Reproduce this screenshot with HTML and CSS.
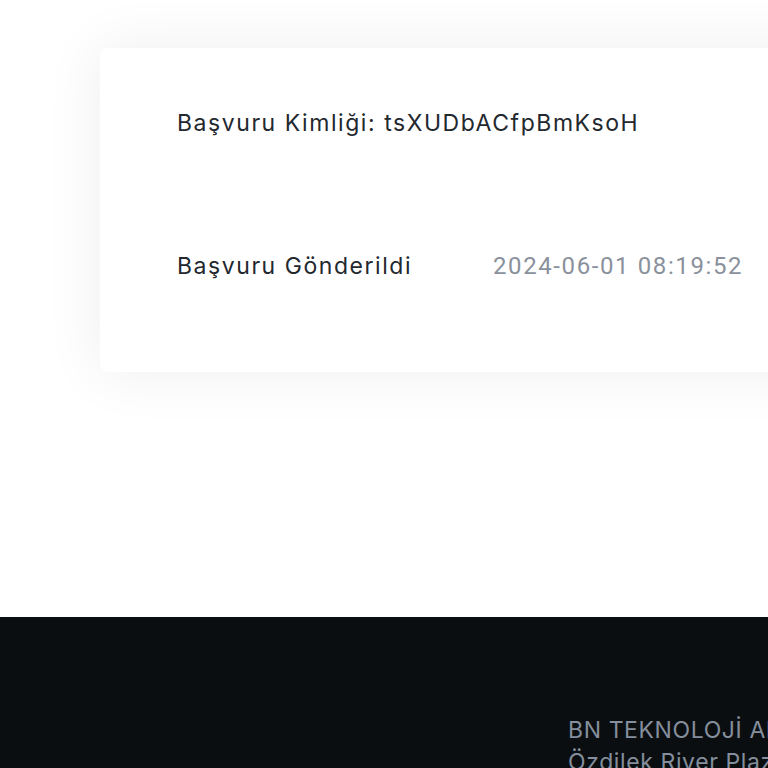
FILE: index.html
```html
<!DOCTYPE html>
<html lang="tr">
<head>
<meta charset="utf-8">
<link rel="stylesheet" href="styles.css">
</head>
<body>
<main class="main">
  <section class="card">
    <div class="row">Başvuru Kimliği: tsXUDbACfpBmKsoH</div>
    <div class="row row-split">
      <span class="label">Başvuru Gönderildi</span>
      <span class="date">2024-06-01 08:19:52</span>
    </div>
  </section>
</main>
<footer class="footer">
  <div class="company">BN TEKNOLOJİ ANONİM ŞİRKETİ</div>
  <div class="company">Özdilek River Plaza</div>
</footer>
</body>
</html>
```
FILE: styles.css
```css
html, body {
  margin: 0;
  padding: 0;
  background: #ffffff;
  overflow: hidden;
}
body {
  font-family: "Inter", "Noto Sans", sans-serif;
  width: 768px;
  height: 768px;
}
.main {
  height: 617px;
  padding-top: 48px;
  padding-left: 100px;
  box-sizing: border-box;
}
.card {
  width: 760px;
  background: #fff;
  border-radius: 8px 0 0 8px;
  box-shadow: 0 0 60px rgba(24, 26, 32, 0.07);
  padding: 51px 0 82px 77px;
  box-sizing: border-box;
  height: 324px;
}
.row {
  height: 48px;
  line-height: 48px;
  font-size: 23px;
  letter-spacing: 1.55px;
  color: #23282e;
  white-space: nowrap;
}
.row-split {
  margin-top: 95px;
  display: grid;
  grid-template-columns: 316px auto;
}
.date {
  color: #8a919c;
  font-family: "Roboto", "Noto Sans", sans-serif;
  font-size: 24px;
  letter-spacing: 1.6px;
}
.footer {
  background: #0b0e11;
  height: 151px;
  padding: 97px 0 0 568px;
  box-sizing: border-box;
  overflow: hidden;
}
.company {
  color: #848e9c;
  font-size: 23px;
  letter-spacing: 0.6px;
  line-height: 32px;
  white-space: nowrap;
}
```
